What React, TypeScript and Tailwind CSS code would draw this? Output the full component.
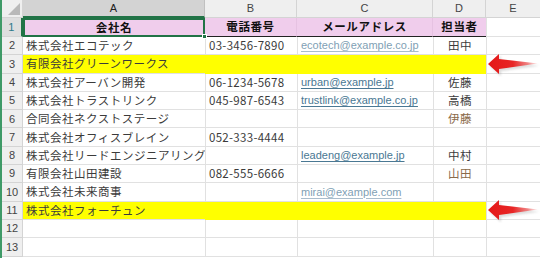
import React from 'react';

type Row = {
  name: string;
  tel?: string;
  mail?: string;
  rep?: string;
  repBrown?: boolean;
  highlight?: boolean;
  faded?: boolean;
};

const rows: Row[] = [
  { name: '株式会社エコテック', tel: '03-3456-7890', mail: 'ecotech@example.co.jp', rep: '田中', faded: true },
  { name: '有限会社グリーンワークス', highlight: true },
  { name: '株式会社アーバン開発', tel: '06-1234-5678', mail: 'urban@example.jp', rep: '佐藤' },
  { name: '株式会社トラストリンク', tel: '045-987-6543', mail: 'trustlink@example.co.jp', rep: '高橋' },
  { name: '合同会社ネクストステージ', rep: '伊藤', repBrown: true },
  { name: '株式会社オフィスブレイン', tel: '052-333-4444' },
  { name: '株式会社リードエンジニアリング', mail: 'leadeng@example.jp', rep: '中村' },
  { name: '有限会社山田建設', tel: '082-555-6666', rep: '山田', repBrown: true },
  { name: '株式会社未来商事', mail: 'mirai@example.com', faded: true },
  { name: '株式会社フォーチュン', highlight: true },
  { name: '' },
  { name: '' },
];

const font = "font-['Noto_Sans_CJK_JP','Noto_Sans',sans-serif]";

const Arrow = ({ top }: { top: string }) => (
  <svg className={`absolute left-[485px] ${top}`} width="54" height="24" viewBox="0 0 54 24">
    <defs>
      <linearGradient id="shaft" x1="0" y1="0" x2="1" y2="0">
        <stop offset="0" stopColor="#e41717" />
        <stop offset="0.5" stopColor="#e82626" />
        <stop offset="0.8" stopColor="#ee5555" stopOpacity="0.7" />
        <stop offset="1" stopColor="#f48a8a" stopOpacity="0.15" />
      </linearGradient>
      <filter id="soft" x="-10%" y="-30%" width="130%" height="160%">
        <feGaussianBlur stdDeviation="0.9" />
      </filter>
    </defs>
    {/* soft drop shadow under the arrow */}
    <path d="M2 12 L13 1.5 L13 6.5 L51 11.5 L13 17 L13 22 Z" fill="#8a8a8a" opacity="0.3" transform="translate(1 1.2)" filter="url(#soft)" />
    <path d="M1 11 L12 1 L12 6 L51 10.5 L12 16 L12 21 Z" fill="url(#shaft)" />
  </svg>
);

const App = () => {
  return (
    <div className={`relative w-[540px] h-[258px] overflow-hidden bg-white border-l-2 border-[#3f9a67] ${font} text-[11.5px] text-[#3b3b3b]`}>
      {/* column header */}
      <div className="flex h-[18px] bg-[#efefef] text-[11px] text-[#444] font-['Liberation_Sans',sans-serif]">
        <div className="relative w-[21px] shrink-0 border-r border-b border-[#d4d4d4]">
          <div className="absolute right-[2px] bottom-[2px] w-0 h-0 border-l-[12px] border-l-transparent border-b-[12px] border-b-[#b9b9b9]" />
        </div>
        <div className="w-[182px] shrink-0 flex items-center justify-center bg-[#d3d3d3] border-r border-[#c0c0c0] border-b-2 border-b-[#217346] text-[#222]">A</div>
        <div className="w-[92px] shrink-0 flex items-center justify-center border-r border-b border-[#d4d4d4]">B</div>
        <div className="w-[136px] shrink-0 flex items-center justify-center border-r border-b border-[#d4d4d4]">C</div>
        <div className="w-[53px] shrink-0 flex items-center justify-center border-r border-b border-[#d4d4d4]">D</div>
        <div className="flex-1 flex items-center justify-center border-b border-[#d4d4d4]">E</div>
      </div>

      {/* row 1: headings */}
      <div className="flex h-[19px] tracking-[0.6px]">
        <div className="w-[21px] shrink-0 flex items-center justify-center bg-[#dedede] border-r-2 border-[#217346] border-b border-b-[#d4d4d4] text-[11px] text-[#2e7a8a] font-['Liberation_Sans',sans-serif]">1</div>
        <div className="relative w-[182px] shrink-0 flex items-center justify-center bg-[#f0cdec] font-bold text-[#111] border-2 border-[#217346]">
          会社名
          <div className="absolute -right-[4px] -bottom-[4px] w-[5px] h-[5px] bg-[#217346] border border-white" />
        </div>
        <div className="w-[92px] shrink-0 flex items-center justify-center bg-[#f0cdec] font-bold text-[#111] border-r border-[#e6c2e2] border-b border-b-[#222]">電話番号</div>
        <div className="w-[136px] shrink-0 flex items-center justify-center bg-[#f0cdec] font-bold text-[#111] border-r border-[#e6c2e2] border-b border-b-[#222]">メールアドレス</div>
        <div className="w-[53px] shrink-0 flex items-center justify-center bg-[#f0cdec] font-bold text-[#111] border-b border-b-[#222]">担当者</div>
        <div className="flex-1 border-l border-[#e1e1e1] border-b border-b-[#e1e1e1]" />
      </div>

      {rows.map((r, i) => {
        const fill = r.highlight ? 'bg-[#ffff00]' : 'bg-white';
        const line = r.highlight ? 'border-[#ffff00]' : 'border-[#e1e1e1]';
        return (
          <div key={i} className="flex h-[18.3px]">
            <div className="w-[21px] shrink-0 flex items-center justify-center bg-[#efefef] border-r border-b border-[#d4d4d4] text-[11px] text-[#444] font-['Liberation_Sans',sans-serif]">
              {i + 2}
            </div>
            <div className={`w-[182px] shrink-0 flex items-center pl-[3px] whitespace-nowrap tracking-[0.5px] border-b border-[#e1e1e1] ${fill}`}>{r.name}</div>
            <div className={`w-[92px] shrink-0 flex items-center pl-[3px] whitespace-nowrap border-l border-b ${line} ${fill} tracking-[0.3px]`}>{r.tel}</div>
            <div className={`w-[136px] shrink-0 flex items-center pl-[3px] whitespace-nowrap border-l border-b ${line} ${fill} font-['Liberation_Sans',sans-serif] text-[11px]`}>
              {r.mail && (
                <span className={`underline underline-offset-2 ${r.faded ? 'text-[#7f9fb5] decoration-[#a9bdcc]' : 'text-[#4a7893] decoration-[#4a7893]'}`}>{r.mail}</span>
              )}
            </div>
            <div className={`w-[53px] shrink-0 flex items-center justify-center whitespace-nowrap tracking-[0.5px] border-l border-b ${line} ${fill} ${r.repBrown ? 'text-[#8a6a4a]' : ''}`}>{r.rep}</div>
            <div className="flex-1 border-l border-b border-[#e1e1e1]" />
          </div>
        );
      })}

      <Arrow top="top-[53px]" />
      <Arrow top="top-[199px]" />
    </div>
  );
};

export default App;
